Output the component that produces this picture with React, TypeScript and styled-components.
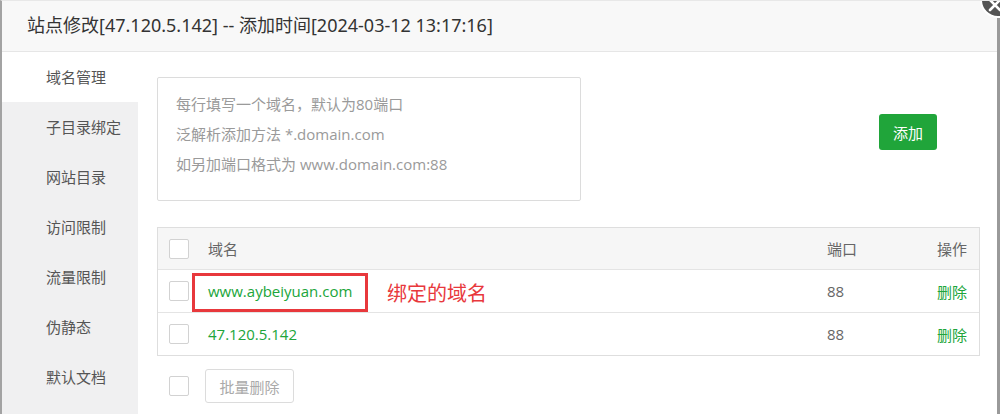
import React from "react";
import styled, { createGlobalStyle } from "styled-components";

const Global = createGlobalStyle`
  html, body { margin: 0; padding: 0; background: #fff; }
  body {
    font-family: "Open Sans", "Noto Sans CJK SC", sans-serif;
    color: #333;
    -webkit-font-smoothing: antialiased;
  }
  * { box-sizing: border-box; }
`;

const Layer = styled.div`
  position: relative;
  width: 1000px;
  height: 414px;
  overflow: hidden;
  background: #fff;
  border-left: 2px solid #a3a3a3;
  border-top: 1px solid #e8e8e8;
  display: flex;
  flex-direction: column;
`;

const RightEdge = styled.div`
  position: absolute;
  right: 0;
  top: 0;
  width: 3px;
  height: 100%;
  background: #9a9a9a;
`;

const Close = styled.div`
  position: absolute;
  left: 978px;
  top: -19px;
  width: 36px;
  height: 36px;
  border-radius: 50%;
  background: #555;
  border: 2px solid #fff;
  display: flex;
  align-items: center;
  justify-content: center;
  z-index: 2;
`;

const Header = styled.div`
  height: 51px;
  flex: none;
  background: #f8f8f8;
  border-bottom: 1px solid #e6e6e6;
  padding-left: 25px;
  font-family: "Noto Sans", "Noto Sans CJK SC", sans-serif;
  font-size: 18px;
  line-height: 49px;
  color: #333;
  white-space: nowrap;
`;

const Body = styled.div`
  flex: 1;
  display: flex;
  min-height: 0;
`;

const Sidebar = styled.nav`
  width: 136px;
  flex: none;
  background: #f0f0f1;
  display: flex;
  flex-direction: column;
`;

const NavItem = styled.div<{ $active?: boolean }>`
  height: 50px;
  flex: none;
  padding-left: 44px;
  font-size: 15px;
  line-height: 50px;
  color: #555;
  background: ${(p) => (p.$active ? "#fff" : "transparent")};
`;

const Main = styled.main`
  flex: 1;
  padding: 25px 17px 0 19px;
  display: flex;
  flex-direction: column;
`;

const TopRow = styled.div`
  display: flex;
  align-items: flex-start;
`;

const Textarea = styled.div`
  width: 424px;
  height: 124px;
  border: 1px solid #dcdcdc;
  border-radius: 2px;
  padding: 11px 0 0 18px;
  display: flex;
  flex-direction: column;
`;

const Hint = styled.div`
  font-size: 15px;
  line-height: 30px;
  color: #9a9a9a;
  white-space: nowrap;
`;

const AddButton = styled.button`
  margin: 37px 0 0 298px;
  width: 58px;
  height: 36px;
  border: none;
  border-radius: 3px;
  background: #20a53a;
  color: #fff;
  font-family: inherit;
  font-size: 15px;
  padding: 0;
`;

const Table = styled.div`
  margin-top: 26px;
  width: 823px;
  border: 1px solid #dedede;
  display: flex;
  flex-direction: column;
`;

const Row = styled.div<{ $head?: boolean }>`
  display: grid;
  grid-template-columns: 50px 1fr 110px 42px;
  align-items: center;
  height: ${(p) => (p.$head ? "41px" : "43px")};
  background: ${(p) => (p.$head ? "#f6f6f6" : "#fff")};
  border-top: ${(p) => (p.$head ? "none" : "1px solid #e4e4e4")};
  font-size: 15px;
  color: #666;
`;

const CheckCell = styled.div`
  padding-left: 11px;
  display: flex;
  align-items: center;
`;

const Check = styled.span`
  display: inline-block;
  width: 20px;
  height: 20px;
  border: 1px solid #d2d2d2;
  border-radius: 2px;
  background: #fff;
`;

const Cell = styled.div<{ $green?: boolean; $right?: boolean }>`
  color: ${(p) => (p.$green ? "#20a53a" : "inherit")};
  text-align: ${(p) => (p.$right ? "right" : "left")};
  padding-right: ${(p) => (p.$right ? "12px" : "0")};
  white-space: nowrap;
`;

const Marked = styled.span`
  position: relative;
  display: inline-block;
`;

const RedBox = styled.span`
  position: absolute;
  left: -16px;
  top: -8px;
  width: 176px;
  height: 39px;
  border: 3px solid #e8383c;
  pointer-events: none;
`;

const Note = styled.span`
  position: absolute;
  left: 179px;
  top: 50%;
  transform: translateY(-50%);
  margin-top: 1px;
  font-family: "Noto Sans CJK SC", sans-serif;
  font-size: 20px;
  color: #e8383c;
  white-space: nowrap;
`;

const Footer = styled.div`
  display: flex;
  align-items: center;
  margin-top: 13px;
  padding-left: 12px;
  gap: 16px;
`;

const BatchButton = styled.button`
  width: 89px;
  height: 34px;
  border: 1px solid #dcdcdc;
  border-radius: 3px;
  background: #fff;
  color: #aaa;
  font-family: inherit;
  font-size: 15px;
  padding: 0;
`;

const navItems = ["域名管理", "子目录绑定", "网站目录", "访问限制", "流量限制", "伪静态", "默认文档"];

const domains = [
  { name: "www.aybeiyuan.com", port: "88", marked: true },
  { name: "47.120.5.142", port: "88", marked: false },
];

export default function App() {
  return (
    <>
      <Global />
      <Layer>
        <Header>站点修改[47.120.5.142] -- 添加时间[2024-03-12 13:17:16]</Header>
        <Body>
          <Sidebar>
            {navItems.map((n, i) => (
              <NavItem key={n} $active={i === 0}>
                {n}
              </NavItem>
            ))}
          </Sidebar>
          <Main>
            <TopRow>
              <Textarea>
                <Hint>每行填写一个域名，默认为80端口</Hint>
                <Hint>泛解析添加方法 *.domain.com</Hint>
                <Hint>如另加端口格式为 www.domain.com:88</Hint>
              </Textarea>
              <AddButton>添加</AddButton>
            </TopRow>
            <Table>
              <Row $head>
                <CheckCell>
                  <Check />
                </CheckCell>
                <Cell>域名</Cell>
                <Cell>端口</Cell>
                <Cell $right>操作</Cell>
              </Row>
              {domains.map((d) => (
                <Row key={d.name}>
                  <CheckCell>
                    <Check />
                  </CheckCell>
                  <Cell $green>
                    {d.marked ? (
                      <Marked>
                        {d.name}
                        <RedBox />
                        <Note>绑定的域名</Note>
                      </Marked>
                    ) : (
                      d.name
                    )}
                  </Cell>
                  <Cell>{d.port}</Cell>
                  <Cell $green $right>
                    删除
                  </Cell>
                </Row>
              ))}
            </Table>
            <Footer>
              <Check />
              <BatchButton>批量删除</BatchButton>
            </Footer>
          </Main>
        </Body>
        <RightEdge />
        <Close>
          <svg width="14" height="14" viewBox="0 0 14 14" style={{ marginTop: 10, marginLeft: -6 }}>
            <path d="M2 2 L12 12 M12 2 L2 12" stroke="#fff" strokeWidth="2.6" strokeLinecap="round" />
          </svg>
        </Close>
      </Layer>
    </>
  );
}
